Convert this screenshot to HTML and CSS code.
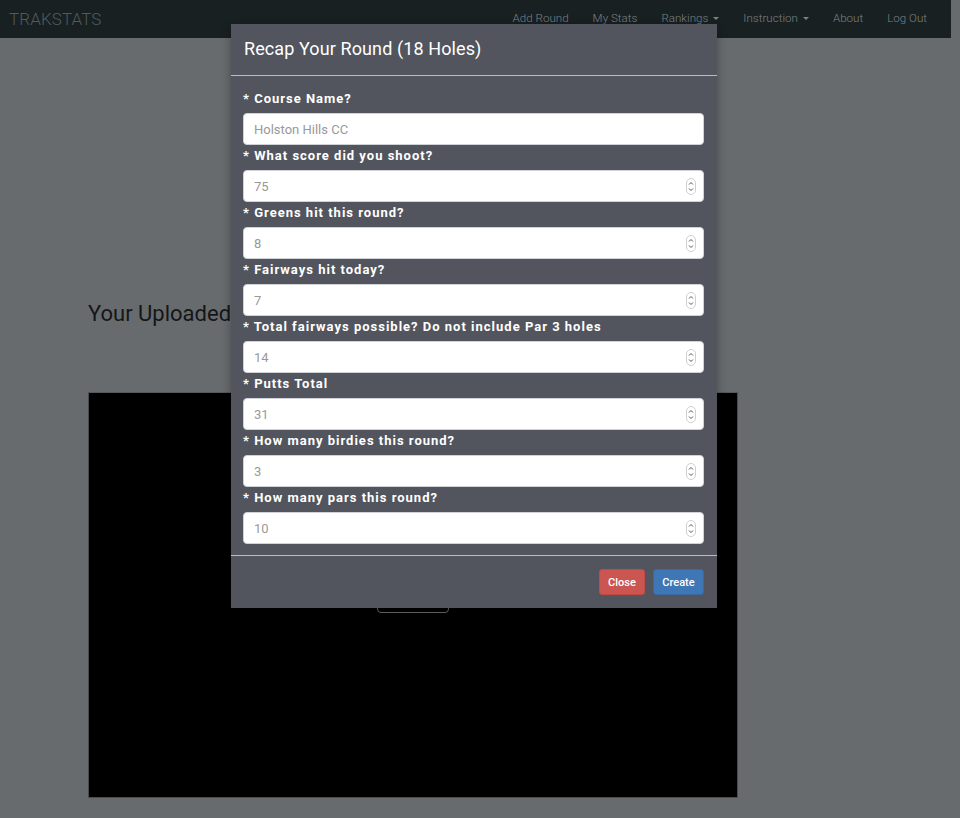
FILE: index.html
```html
<!DOCTYPE html>
<html>
<head>
<meta charset="utf-8">
<link rel="stylesheet" href="styles.css">
</head>
<body>
<nav class="navbar">
  <a class="brand">TRAKSTATS</a>
  <ul class="nav-links">
    <li>Add Round</li>
    <li>My Stats</li>
    <li>Rankings <span class="caret"></span></li>
    <li>Instruction <span class="caret"></span></li>
    <li>About</li>
    <li>Log Out</li>
  </ul>
</nav>
<main class="page">
  <h2 class="page-title">Your Uploaded</h2>
  <div class="video-box">
    <span class="video-btn"></span>
  </div>
</main>

<div class="modal">
  <div class="modal-header">Recap Your Round (18 Holes)</div>
  <form class="modal-body">
    <label class="field-label">* Course Name?</label>
    <div class="field-wrap"><input class="field" type="text" placeholder="Holston Hills CC"></div>
    <label class="field-label">* What score did you shoot?</label>
    <div class="field-wrap"><input class="field" type="number" placeholder="75"><svg class="spin" viewBox="0 0 10 17" width="10" height="17"><rect x="0.5" y="0.5" width="9" height="16" rx="4.5"/><path d="M3 6.5 L5 4.5 L7 6.5 M3 10.5 L5 12.5 L7 10.5"/></svg></div>
    <label class="field-label">* Greens hit this round?</label>
    <div class="field-wrap"><input class="field" type="number" placeholder="8"><svg class="spin" viewBox="0 0 10 17" width="10" height="17"><rect x="0.5" y="0.5" width="9" height="16" rx="4.5"/><path d="M3 6.5 L5 4.5 L7 6.5 M3 10.5 L5 12.5 L7 10.5"/></svg></div>
    <label class="field-label">* Fairways hit today?</label>
    <div class="field-wrap"><input class="field" type="number" placeholder="7"><svg class="spin" viewBox="0 0 10 17" width="10" height="17"><rect x="0.5" y="0.5" width="9" height="16" rx="4.5"/><path d="M3 6.5 L5 4.5 L7 6.5 M3 10.5 L5 12.5 L7 10.5"/></svg></div>
    <label class="field-label">* Total fairways possible? Do not include Par 3 holes</label>
    <div class="field-wrap"><input class="field" type="number" placeholder="14"><svg class="spin" viewBox="0 0 10 17" width="10" height="17"><rect x="0.5" y="0.5" width="9" height="16" rx="4.5"/><path d="M3 6.5 L5 4.5 L7 6.5 M3 10.5 L5 12.5 L7 10.5"/></svg></div>
    <label class="field-label">* Putts Total</label>
    <div class="field-wrap"><input class="field" type="number" placeholder="31"><svg class="spin" viewBox="0 0 10 17" width="10" height="17"><rect x="0.5" y="0.5" width="9" height="16" rx="4.5"/><path d="M3 6.5 L5 4.5 L7 6.5 M3 10.5 L5 12.5 L7 10.5"/></svg></div>
    <label class="field-label">* How many birdies this round?</label>
    <div class="field-wrap"><input class="field" type="number" placeholder="3"><svg class="spin" viewBox="0 0 10 17" width="10" height="17"><rect x="0.5" y="0.5" width="9" height="16" rx="4.5"/><path d="M3 6.5 L5 4.5 L7 6.5 M3 10.5 L5 12.5 L7 10.5"/></svg></div>
    <label class="field-label">* How many pars this round?</label>
    <div class="field-wrap"><input class="field" type="number" placeholder="10"><svg class="spin" viewBox="0 0 10 17" width="10" height="17"><rect x="0.5" y="0.5" width="9" height="16" rx="4.5"/><path d="M3 6.5 L5 4.5 L7 6.5 M3 10.5 L5 12.5 L7 10.5"/></svg></div>
  </form>
  <div class="modal-footer">
    <button class="btn btn-close">Close</button>
    <button class="btn btn-create">Create</button>
  </div>
</div>
</body>
</html>
```
FILE: styles.css
```css
html, body {
  margin: 0;
  padding: 0;
}
body {
  background: #676b6e;
  font-family: Roboto, "Liberation Sans", sans-serif;
  width: 960px;
  height: 818px;
  overflow: hidden;
  position: relative;
}
.navbar {
  width: 951px;
  height: 38px;
  background: #182022;
  display: flex;
  align-items: center;
  justify-content: space-between;
  box-sizing: border-box;
  padding: 0 0 2px 9px;
}
.brand {
  font-weight: 300;
  font-size: 17px;
  color: #525a5b;
  letter-spacing: 0.1px;
  padding-top: 2px;
}
.nav-links {
  list-style: none;
  display: flex;
  margin: 0;
  padding: 0 24px 0 0;
}
.nav-links li {
  font-size: 11.6px;
  font-weight: 300;
  color: #7a8283;
  padding: 0 12px;
  display: flex;
  align-items: center;
}
.nav-links li:first-child { padding-left: 0; }
.nav-links li:last-child { padding-right: 0; }
.caret {
  display: inline-block;
  width: 0;
  height: 0;
  margin-left: 5px;
  border-top: 3px solid #7a8283;
  border-left: 3px solid transparent;
  border-right: 3px solid transparent;
}
.page {
  padding: 0 0 0 88px;
}
.page-title {
  margin: 0;
  padding-top: 262px;
  font-weight: 400;
  font-size: 22px;
  line-height: 28px;
  color: #151617;
}
.video-box {
  margin-top: 64px;
  width: 650px;
  height: 406px;
  background: #000;
  border: 1px solid #4a4d50;
  border-top-color: #55595c;
  box-sizing: border-box;
  position: relative;
}
.video-btn {
  position: absolute;
  left: 288px;
  top: 190px;
  width: 72px;
  height: 30px;
  box-sizing: border-box;
  border: 1px solid #666a6d;
  border-radius: 4px;
}
.modal {
  position: absolute;
  left: 231px;
  top: 24px;
  width: 486px;
  height: 584px;
  background: #52555e;
  box-shadow: 0 3px 9px rgba(0, 0, 0, 0.3);
  display: flex;
  flex-direction: column;
}
.modal-header {
  height: 52px;
  box-sizing: border-box;
  padding: 14px 13px 0;
  font-size: 18px;
  color: #ffffff;
  line-height: 22px;
  letter-spacing: 0.1px;
  border-bottom: 1px solid #b9bbbf;
}
.modal-body {
  display: flex;
  flex-direction: column;
  padding: 12px 13px 11px 12px;
  margin: 0;
  border-bottom: 1px solid #b9bbbf;
}
.field-label {
  font-size: 13px;
  font-weight: 700;
  color: #ffffff;
  letter-spacing: 1px;
  line-height: 20px;
  padding-top: 1px;
  margin-bottom: 4px;
}
.field-wrap {
  position: relative;
  height: 32px;
}
.field {
  width: 100%;
  height: 32px;
  box-sizing: border-box;
  border: 1px solid #cfd3d8;
  border-radius: 4px;
  background: #fff;
  padding: 0 10px;
  font-family: Roboto, "Liberation Sans", sans-serif;
  font-size: 13px;
  color: #555;
  margin: 0;
  display: block;
}
.field::placeholder {
  color: #999;
}
.field::-webkit-inner-spin-button,
.field::-webkit-outer-spin-button {
  -webkit-appearance: none;
  margin: 0;
}
.spin {
  position: absolute;
  right: 8px;
  top: 8px;
  fill: none;
}
.spin rect {
  stroke: #cfcfcf;
  stroke-width: 1;
}
.spin path {
  stroke: #555;
  stroke-width: 1;
}
.modal-footer {
  flex: 1;
  display: flex;
  justify-content: flex-end;
  align-items: center;
  gap: 8px;
  padding: 0 13px 0 0;
}
.btn {
  height: 26px;
  border: 1px solid transparent;
  border-radius: 3px;
  color: #fff;
  font-family: Roboto, "Liberation Sans", sans-serif;
  font-size: 11px;
  font-weight: 500;
  padding: 0 6px;
}
.btn-close {
  width: 46px;
  background: #cb5651;
  border-color: #c24a45;
}
.btn-create {
  width: 51px;
  background: #3f76b6;
  border-color: #38699f;
}
```
